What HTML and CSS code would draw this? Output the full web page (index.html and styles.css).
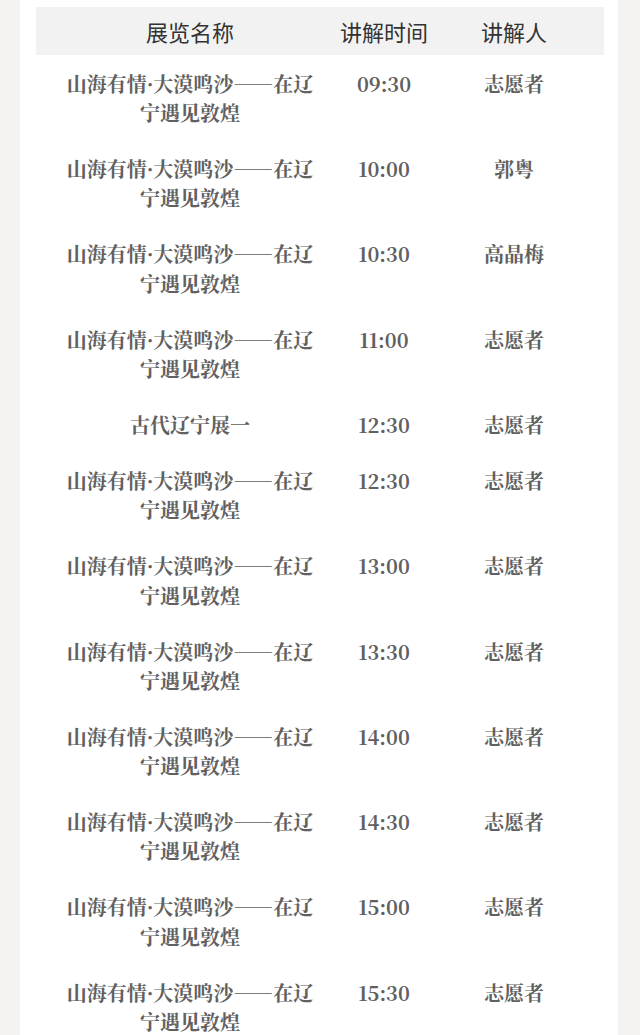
FILE: index.html
```html
<!DOCTYPE html>
<html lang="zh-CN">
<head>
<meta charset="utf-8">
<title>讲解安排</title>
<link rel="stylesheet" href="styles.css">
</head>
<body>
<div class="page">
  <div class="sheet">
    <div class="table">
      <div class="row head">
        <div class="cell c1">展览名称</div>
        <div class="cell c2">讲解时间</div>
        <div class="cell c3">讲解人</div>
      </div>
      <div class="body">
        <div class="row"><div class="cell c1">山海有情·大漠鸣沙——在辽宁遇见敦煌</div><div class="cell c2">09:30</div><div class="cell c3">志愿者</div></div>
        <div class="row"><div class="cell c1">山海有情·大漠鸣沙——在辽宁遇见敦煌</div><div class="cell c2">10:00</div><div class="cell c3">郭粤</div></div>
        <div class="row"><div class="cell c1">山海有情·大漠鸣沙——在辽宁遇见敦煌</div><div class="cell c2">10:30</div><div class="cell c3">高晶梅</div></div>
        <div class="row"><div class="cell c1">山海有情·大漠鸣沙——在辽宁遇见敦煌</div><div class="cell c2">11:00</div><div class="cell c3">志愿者</div></div>
        <div class="row"><div class="cell c1">古代辽宁展一</div><div class="cell c2">12:30</div><div class="cell c3">志愿者</div></div>
        <div class="row"><div class="cell c1">山海有情·大漠鸣沙——在辽宁遇见敦煌</div><div class="cell c2">12:30</div><div class="cell c3">志愿者</div></div>
        <div class="row"><div class="cell c1">山海有情·大漠鸣沙——在辽宁遇见敦煌</div><div class="cell c2">13:00</div><div class="cell c3">志愿者</div></div>
        <div class="row"><div class="cell c1">山海有情·大漠鸣沙——在辽宁遇见敦煌</div><div class="cell c2">13:30</div><div class="cell c3">志愿者</div></div>
        <div class="row"><div class="cell c1">山海有情·大漠鸣沙——在辽宁遇见敦煌</div><div class="cell c2">14:00</div><div class="cell c3">志愿者</div></div>
        <div class="row"><div class="cell c1">山海有情·大漠鸣沙——在辽宁遇见敦煌</div><div class="cell c2">14:30</div><div class="cell c3">志愿者</div></div>
        <div class="row"><div class="cell c1">山海有情·大漠鸣沙——在辽宁遇见敦煌</div><div class="cell c2">15:00</div><div class="cell c3">志愿者</div></div>
        <div class="row"><div class="cell c1">山海有情·大漠鸣沙——在辽宁遇见敦煌</div><div class="cell c2">15:30</div><div class="cell c3">志愿者</div></div>
      </div>
    </div>
  </div>
</div>
</body>
</html>
```

FILE: styles.css
```css
html, body {
  margin: 0;
  padding: 0;
  background: #f4f3f1;
  height: 100%;
  overflow: hidden;
}

.page {
  padding: 0 22px 0 20px;
}

.sheet {
  background: #ffffff;
  padding: 7px 14px 0 16px;
  min-height: 1100px;
}

.table {
  width: 568px;
}

.row {
  display: grid;
  grid-template-columns: 308px 80px 180px;
  align-items: start;
}

.cell {
  text-align: center;
}

.c1 {
  padding: 0 28px;
}

.head {
  background: #f2f2f2;
  height: 48px;
  align-items: center;
  font-family: "Noto Sans CJK SC", "Noto Sans", sans-serif;
  font-size: 22px;
  color: #333333;
  white-space: nowrap;
}

.head .c1 {
  padding: 0;
}

.head .c2 {
  margin: 0 -10px;
}

.body {
  padding-top: 0.5px;
}

.body .row {
  padding: 13.35px 0;
  font-family: "Noto Serif CJK SC", "Liberation Serif", serif;
  font-size: 20px;
  font-weight: 700;
  line-height: 29.3px;
  color: #606060;
}
```
